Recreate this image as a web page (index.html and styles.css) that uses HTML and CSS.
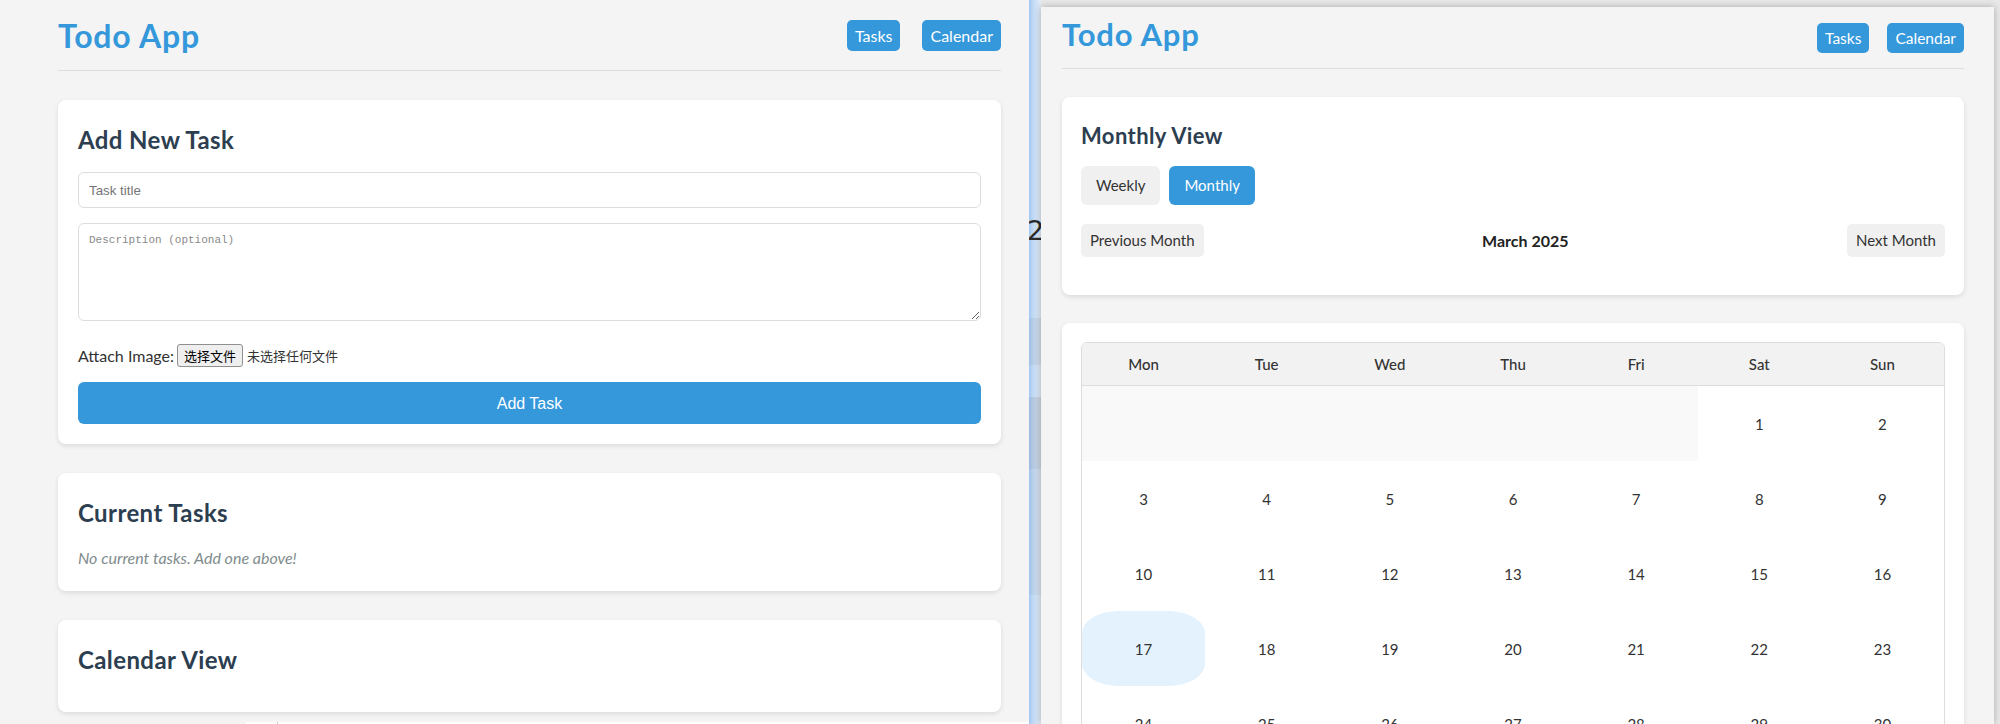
FILE: index.html
```html
<!DOCTYPE html>
<html lang="en">
<head>
<meta charset="utf-8">
<title>Todo App</title>
<link rel="stylesheet" href="styles.css">
</head>
<body>
<div class="desktop">
  <section class="win win-left">
    <div class="app app-left">
      <header class="app-header">
        <div class="brand-wrap"><h1 class="brand">Todo App</h1></div>
        <nav class="nav">
          <button class="nav-btn">Tasks</button>
          <button class="nav-btn">Calendar</button>
        </nav>
      </header>

      <div class="card">
        <h2 class="card-title">Add New Task</h2>
        <input class="field" type="text" placeholder="Task title">
        <textarea class="field area" placeholder="Description (optional)"></textarea>
        <div class="attach">
          <span class="attach-label">Attach Image:</span>
          <span class="file-btn">选择文件</span>
          <span class="file-name">未选择任何文件</span>
        </div>
        <button class="primary">Add Task</button>
      </div>

      <div class="card">
        <h2 class="card-title">Current Tasks</h2>
        <p class="empty">No current tasks. Add one above!</p>
      </div>

      <div class="card">
        <h2 class="card-title">Calendar View</h2>
      </div>

      <div class="peek"><div class="peek-line"></div></div>
    </div>
  </section>

  <div class="strip">
    <div class="band b1"></div>
    <div class="band digit">2</div>
    <div class="band b3"></div>
    <div class="band b4"></div>
    <div class="band b5"></div>
    <div class="band b6"></div>
    <div class="band b7"></div>
  </div>

  <div class="right-area">
    <section class="win win-right">
      <header class="app-header r-header">
        <div class="brand-wrap"><h1 class="brand">Todo App</h1></div>
        <nav class="nav">
          <button class="nav-btn">Tasks</button>
          <button class="nav-btn">Calendar</button>
        </nav>
      </header>

      <div class="card r-card">
        <h2 class="card-title r-title">Monthly View</h2>
        <div class="toggle">
          <button class="tbtn">Weekly</button>
          <button class="tbtn active">Monthly</button>
        </div>
        <div class="month-nav">
          <button class="mbtn">Previous Month</button>
          <span class="month-label">March 2025</span>
          <button class="mbtn">Next Month</button>
        </div>
      </div>

      <div class="card r-card cal-card">
        <div class="cal">
          <div class="cal-head">
            <span>Mon</span><span>Tue</span><span>Wed</span><span>Thu</span><span>Fri</span><span>Sat</span><span>Sun</span>
          </div>
          <div class="cal-body">
            <div class="day empty"></div><div class="day empty"></div><div class="day empty"></div><div class="day empty"></div><div class="day empty"></div><div class="day">1</div><div class="day">2</div>
            <div class="day">3</div><div class="day">4</div><div class="day">5</div><div class="day">6</div><div class="day">7</div><div class="day">8</div><div class="day">9</div>
            <div class="day">10</div><div class="day">11</div><div class="day">12</div><div class="day">13</div><div class="day">14</div><div class="day">15</div><div class="day">16</div>
            <div class="day today">17</div><div class="day">18</div><div class="day">19</div><div class="day">20</div><div class="day">21</div><div class="day">22</div><div class="day">23</div>
            <div class="day">24</div><div class="day">25</div><div class="day">26</div><div class="day">27</div><div class="day">28</div><div class="day">29</div><div class="day">30</div>
          </div>
        </div>
      </div>
    </section>
  </div>
</div>
</body>
</html>
```

FILE: styles.css
```css
* { box-sizing: border-box; }

html, body {
  margin: 0;
  padding: 0;
}

body {
  width: 2000px;
  height: 724px;
  overflow: hidden;
  background: #e6e6e6;
  font-family: Lato, "Noto Sans CJK SC", sans-serif;
  color: #333;
}

.desktop {
  display: flex;
  height: 724px;
}

/* ---------- left window ---------- */
.win-left {
  flex: none;
  width: 1029px;
  height: 724px;
  overflow: hidden;
  background: #f4f4f4;
}

.app-left {
  width: 943px;
  margin-left: 58px;
}

.app-header {
  display: flex;
  justify-content: space-between;
  align-items: center;
  border-bottom: 1px solid #ddd;
}

.brand-wrap {
  padding: 14px 0 13px;
}

.brand {
  margin: 0;
  font-size: 32px;
  line-height: 43px;
  font-weight: 700;
  letter-spacing: 0.8px;
  color: #3498db;
}

.nav {
  display: flex;
  gap: 22px;
}

.nav-btn {
  font-family: Lato, sans-serif;
  font-size: 16px;
  line-height: 21px;
  padding: 5px 8px;
  border: none;
  border-radius: 5px;
  background: #3498db;
  color: #fff;
}

.card {
  margin-top: 29px;
  padding: 20px;
  background: #fff;
  border-radius: 8px;
  box-shadow: 0 2px 5px rgba(0, 0, 0, 0.1);
}

.card-title {
  margin: 0 0 14px;
  padding-top: 2px;
  font-size: 24px;
  line-height: 36px;
  font-weight: 700;
  letter-spacing: 0.4px;
  color: #2c3e50;
}

.field {
  display: block;
  width: 100%;
  height: 36px;
  margin: 0 0 15px;
  padding: 10px;
  border: 1px solid #ddd;
  border-radius: 6px;
  background: #fff;
  font-family: "Liberation Sans", Arial, sans-serif;
  font-size: 13.33px;
  color: #333;
}

.field::placeholder {
  color: #757575;
}

.area {
  height: 98px;
  margin-bottom: 20px;
  font-family: "Liberation Mono", monospace;
  font-size: 11px;
  resize: vertical;
}

.area::placeholder {
  color: #8a8a8a;
}

.attach {
  display: flex;
  align-items: center;
  height: 29px;
  margin-bottom: 12px;
  font-size: 16px;
}

.file-btn {
  display: inline-flex;
  align-items: center;
  height: 23px;
  margin-left: 3px;
  padding: 0 6px;
  border: 1px solid #8f8f8f;
  border-radius: 3px;
  background: #efefef;
  color: #000;
  font-family: "Noto Sans CJK SC", sans-serif;
  font-size: 13px;
}

.file-name {
  margin-left: 4px;
  font-family: "Noto Sans CJK SC", sans-serif;
  font-size: 13px;
  color: #333;
}

.primary {
  display: block;
  width: 100%;
  height: 42px;
  border: none;
  border-radius: 6px;
  background: #3498db;
  color: #fff;
  font-family: "Liberation Sans", Arial, sans-serif;
  font-size: 16px;
  padding-top: 2px;
}

.empty {
  margin: 0;
  font-size: 16px;
  line-height: 26px;
  font-style: italic;
  color: #7f8c8d;
}

.peek {
  width: 783px;
  height: 20px;
  margin: 10px 0 0 188px;
  background: #fff;
}

.peek-line {
  width: 1px;
  height: 20px;
  margin-left: 31px;
  background: #ccc;
}

/* ---------- middle strip ---------- */
.strip {
  flex: none;
  width: 12px;
  height: 724px;
  overflow: hidden;
  display: flex;
  flex-direction: column;
  background: linear-gradient(to right, #a2c7f1 0%, #c6dcf6 40%, #e3edf8 100%);
}

.band { flex: none; }
.b1 { height: 216px; }
.digit {
  height: 30px;
  margin-left: -2px;
  font-family: "DejaVu Sans", sans-serif;
  font-size: 27px;
  line-height: 30px;
  color: #2b2b2b;
}
.b3 { height: 72px; }
.b4 { height: 47px; background: rgba(120, 130, 140, 0.12); }
.b5 { height: 32px; }
.b6 { height: 72px; background: rgba(120, 130, 140, 0.18); }
.b7 { height: 126px; background: rgba(120, 130, 140, 0.08); }

/* ---------- right window ---------- */
.right-area {
  flex: 1;
  height: 724px;
  padding-top: 7px;
  background: #e8e8e8;
}

.win-right {
  width: 953px;
  height: 717px;
  overflow: hidden;
  padding: 0 30px 0 21px;
  background: #f4f4f4;
  box-shadow: 0 0 7px rgba(0, 0, 0, 0.28);
}

.r-header .brand-wrap {
  padding: 7px 0 13px;
}

.r-header .brand {
  font-size: 31px;
  line-height: 41px;
}

.r-header .nav {
  gap: 18px;
}

.r-header .nav-btn {
  font-size: 15.5px;
  line-height: 20px;
}

.r-card {
  margin-top: 28px;
  padding: 20px 19px;
}

.r-title {
  margin-bottom: 13px;
  padding-top: 1px;
  font-size: 22px;
  line-height: 35px;
}

.toggle {
  display: flex;
  gap: 9px;
  margin-bottom: 19px;
}

.tbtn {
  padding: 10px 15px;
  border: none;
  border-radius: 6px;
  background: #f0f0f0;
  color: #333;
  font-family: Lato, sans-serif;
  font-size: 15px;
  line-height: 19px;
}

.tbtn.active {
  background: #3498db;
  color: #fff;
}

.month-nav {
  display: flex;
  justify-content: space-between;
  align-items: center;
  margin-bottom: 18px;
}

.mbtn {
  padding: 7px 9px;
  border: none;
  border-radius: 5px;
  background: #f0f0f0;
  color: #333;
  font-family: Lato, sans-serif;
  font-size: 15px;
  line-height: 19px;
}

.month-label {
  font-size: 16px;
  font-weight: 700;
  color: #222;
}

.cal-card {
  padding: 19px;
}

.cal {
  border: 1px solid #ddd;
  border-radius: 6px;
  overflow: hidden;
}

.cal-head {
  display: grid;
  grid-template-columns: repeat(7, 1fr);
  height: 43px;
  background: #f2f2f2;
  border-bottom: 1px solid #ddd;
}

.cal-head span {
  display: flex;
  align-items: center;
  justify-content: center;
  font-size: 15px;
  font-weight: 500;
  color: #333;
}

.cal-body {
  display: grid;
  grid-template-columns: repeat(7, 1fr);
  grid-auto-rows: 75px;
}

.day {
  display: flex;
  align-items: center;
  justify-content: center;
  font-size: 15px;
  color: #333;
}

.day.empty {
  background: #f9f9f9;
}

.day.today {
  background: #e3f2fd;
  border-radius: 30%;
}
```
